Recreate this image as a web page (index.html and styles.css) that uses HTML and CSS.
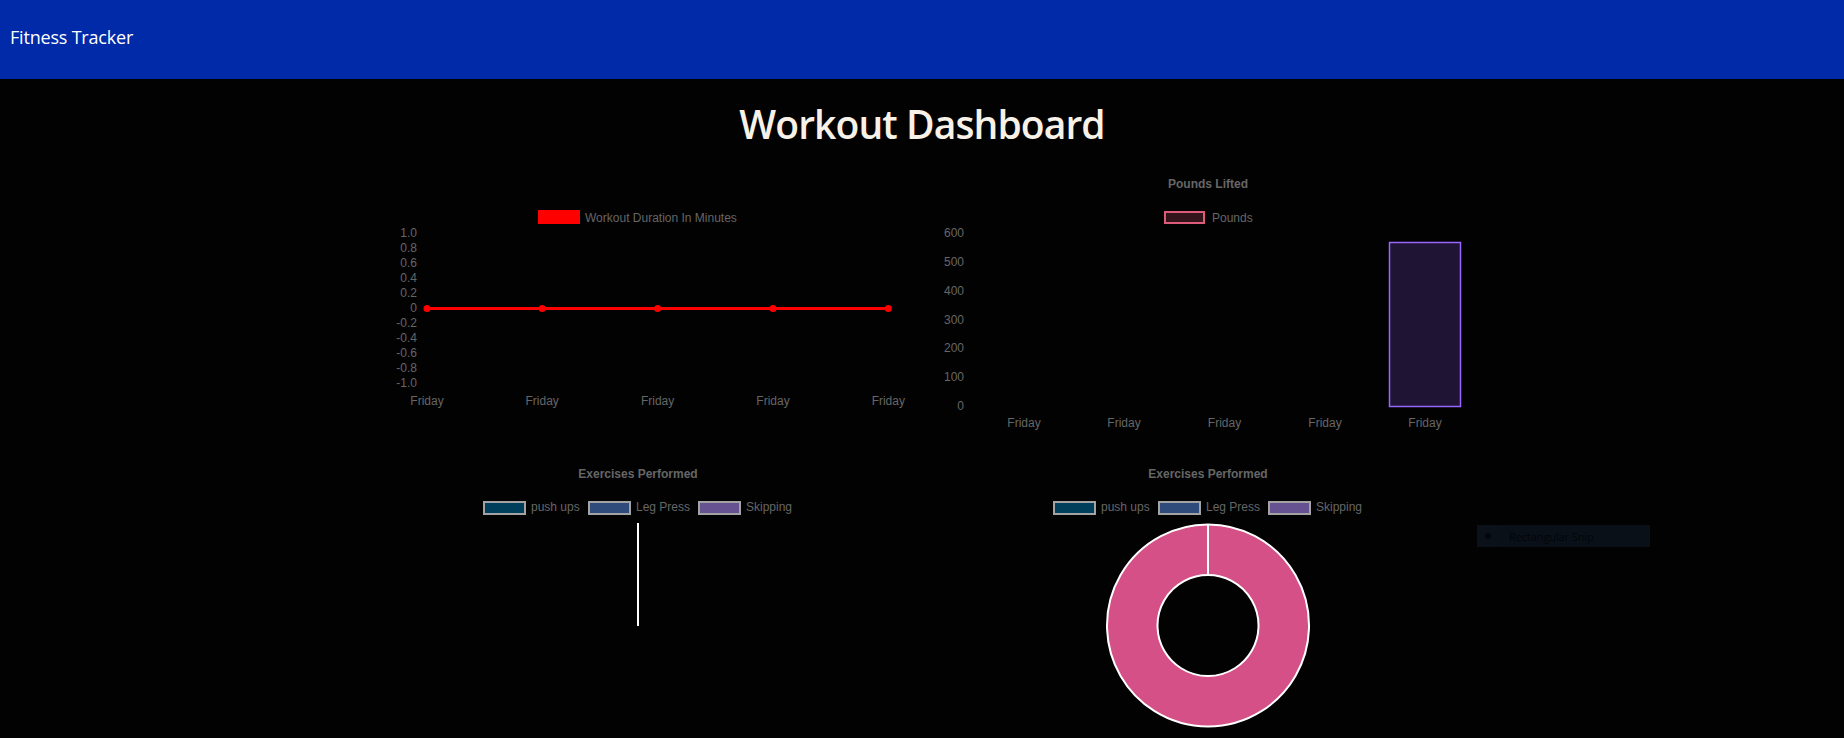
FILE: index.html
```html
<!DOCTYPE html>
<html lang="en">
<head>
<meta charset="utf-8">
<title>Fitness Tracker</title>
<link rel="stylesheet" href="styles.css">
</head>
<body>
<header class="topbar">
  <span class="brand">Fitness Tracker</span>
</header>
<div class="title-wrap">
  <h1 class="title">Workout Dashboard</h1>
</div>
<main class="charts">
  <div class="chart-cell">
    <svg class="chart" width="540" height="290" viewBox="367 160 540 290">
      <rect x="538" y="210" width="42" height="14" fill="#ff0000"/>
      <text class="lbl" x="585" y="222">Workout Duration In Minutes</text>
      <g class="lbl" text-anchor="end">
        <text x="417" y="237">1.0</text>
        <text x="417" y="252">0.8</text>
        <text x="417" y="267">0.6</text>
        <text x="417" y="282">0.4</text>
        <text x="417" y="297">0.2</text>
        <text x="417" y="312">0</text>
        <text x="417" y="327">-0.2</text>
        <text x="417" y="342">-0.4</text>
        <text x="417" y="357">-0.6</text>
        <text x="417" y="372">-0.8</text>
        <text x="417" y="387">-1.0</text>
      </g>
      <line x1="427" y1="308.5" x2="888" y2="308.5" stroke="#ff0000" stroke-width="3"/>
      <g fill="#ff0000">
        <circle cx="427" cy="308.5" r="3.5"/>
        <circle cx="542.2" cy="308.5" r="3.5"/>
        <circle cx="657.6" cy="308.5" r="3.5"/>
        <circle cx="773" cy="308.5" r="3.5"/>
        <circle cx="888.3" cy="308.5" r="3.5"/>
      </g>
      <g class="lbl" text-anchor="middle">
        <text x="427" y="405">Friday</text>
        <text x="542.2" y="405">Friday</text>
        <text x="657.6" y="405">Friday</text>
        <text x="773" y="405">Friday</text>
        <text x="888.3" y="405">Friday</text>
      </g>
    </svg>
  </div>
  <div class="chart-cell">
    <svg class="chart" width="540" height="290" viewBox="937 160 540 290">
      <text class="lbl ttl" x="1208" y="188" text-anchor="middle">Pounds Lifted</text>
      <rect x="1165" y="212" width="39" height="11" fill="#33141a" stroke="#dc5a7a" stroke-width="2"/>
      <text class="lbl" x="1212" y="222">Pounds</text>
      <g class="lbl" text-anchor="end">
        <text x="964" y="237">600</text>
        <text x="964" y="265.8">500</text>
        <text x="964" y="294.7">400</text>
        <text x="964" y="323.5">300</text>
        <text x="964" y="352.3">200</text>
        <text x="964" y="381.2">100</text>
        <text x="964" y="410">0</text>
      </g>
      <rect x="1389.5" y="242.5" width="71" height="164" fill="#1f1433" stroke="#9966ff" stroke-width="1.5"/>
      <g class="lbl" text-anchor="middle">
        <text x="1024" y="427">Friday</text>
        <text x="1124" y="427">Friday</text>
        <text x="1224.5" y="427">Friday</text>
        <text x="1325" y="427">Friday</text>
        <text x="1425" y="427">Friday</text>
      </g>
    </svg>
  </div>
  <div class="chart-cell">
    <svg class="chart" width="540" height="290" viewBox="367 450 540 290">
      <text class="lbl ttl" x="638" y="478" text-anchor="middle">Exercises Performed</text>
      <g stroke="#a3a3a3" stroke-width="2">
        <rect x="484" y="502" width="41" height="12" fill="#003f5c"/>
        <rect x="589" y="502" width="41" height="12" fill="#2f4b7c"/>
        <rect x="699" y="502" width="41" height="12" fill="#665191"/>
      </g>
      <text class="lbl" x="531" y="511">push ups</text>
      <text class="lbl" x="636" y="511">Leg Press</text>
      <text class="lbl" x="746" y="511">Skipping</text>
      <line x1="638" y1="523" x2="638" y2="626" stroke="#ffffff" stroke-width="2"/>
    </svg>
  </div>
  <div class="chart-cell">
    <svg class="chart" width="540" height="290" viewBox="937 450 540 290">
      <text class="lbl ttl" x="1208" y="478" text-anchor="middle">Exercises Performed</text>
      <g stroke="#a3a3a3" stroke-width="2">
        <rect x="1054" y="502" width="41" height="12" fill="#003f5c"/>
        <rect x="1159" y="502" width="41" height="12" fill="#2f4b7c"/>
        <rect x="1269" y="502" width="41" height="12" fill="#665191"/>
      </g>
      <text class="lbl" x="1101" y="511">push ups</text>
      <text class="lbl" x="1206" y="511">Leg Press</text>
      <text class="lbl" x="1316" y="511">Skipping</text>
      <path d="M1208 524.5 a101 101 0 1 0 0.01 0 Z M1208 575 a50.5 50.5 0 1 0 0.01 0 Z" fill="#d45087" fill-rule="evenodd" stroke="#ffffff" stroke-width="2"/>
      <line x1="1208" y1="524.5" x2="1208" y2="575" stroke="#ffffff" stroke-width="2"/>
    </svg>
  </div>
</main>
<div class="snip">
  <span class="snip-icon"><span class="snip-dot"></span></span>
  <span class="snip-text">Rectangular Snip</span>
</div>
</body>
</html>
```
FILE: styles.css
```css
html, body {
  margin: 0;
  padding: 0;
}
body {
  background: #020203;
  font-family: "Open Sans", "Noto Sans", sans-serif;
  overflow: hidden;
}
.topbar {
  height: 79px;
  box-sizing: border-box;
  background: #002aa8;
  display: flex;
  align-items: center;
  padding: 0 0 3px 10px;
}
.brand {
  color: #ffffff;
  font-size: 18px;
  letter-spacing: -0.2px;
  line-height: 1.2;
}
.title-wrap {
  padding: 21px 0 12px;
  display: flex;
  justify-content: center;
}
.title {
  margin: 0;
  font-size: 39px;
  line-height: 48px;
  font-weight: 600;
  letter-spacing: -0.9px;
  color: #f7f1e8;
}
.charts {
  width: 1140px;
  margin: 0 auto;
  display: grid;
  grid-template-columns: 1fr 1fr;
  grid-auto-rows: 290px;
}
.chart-cell {
  padding: 0 15px;
}
.chart {
  display: block;
  overflow: visible;
}
.lbl {
  font-family: "Liberation Sans", Arial, sans-serif;
  font-size: 12px;
  fill: #666666;
}
.ttl {
  font-weight: bold;
}
.snip {
  position: absolute;
  left: 1477px;
  top: 525px;
  width: 173px;
  height: 22px;
  background: #0a1018;
  display: flex;
  align-items: center;
}
.snip-icon {
  width: 22px;
  height: 22px;
  background: #0b1119;
  display: flex;
  align-items: center;
  justify-content: center;
}
.snip-dot {
  width: 6px;
  height: 6px;
  border-radius: 50%;
  background: #03070c;
}
.snip-text {
  margin-left: 10px;
  font-size: 11px;
  color: #020509;
  letter-spacing: -0.1px;
}
```
